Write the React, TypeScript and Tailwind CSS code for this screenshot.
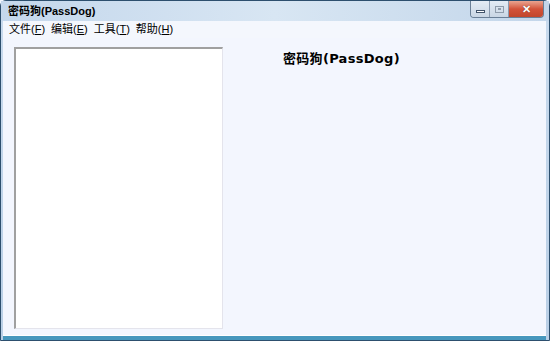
import React from 'react'

const font = { fontFamily: '"Liberation Sans", "Noto Sans CJK SC", sans-serif' }

const App = () => {
  return (
    <div className="w-[550px] h-[341px] bg-[#f3f6fe] overflow-hidden" style={font}>
      <div className="w-full h-full flex flex-col rounded-t-[6px] border border-[#2d4f6e] bg-gradient-to-b from-[#c9dbee] to-[#b9cfe6]">
        {/* title bar */}
        <div className="h-[20px] flex items-center justify-between pl-[7px] pr-[5px] bg-gradient-to-r from-[#c4d7ec] via-[#d8e6f3] to-[#c3d6ea]">
          <span className="text-[11px] font-bold text-black">密码狗(PassDog)</span>
          <div className="flex h-[17px] self-start rounded-b-[4px] overflow-hidden border border-t-0 border-[#6a7f96]">
            <div className="w-[19px] flex items-center justify-center bg-gradient-to-b from-[#e4ecf5] to-[#c9d6e4] border-r border-[#8a9bb0]">
              <div className="w-[9px] h-[3px] border border-[#41536a] bg-white mt-[4px]" />
            </div>
            <div className="w-[19px] flex items-center justify-center bg-gradient-to-b from-[#e4ecf5] to-[#c9d6e4] border-r border-[#8a9bb0]">
              <div className="w-[9px] h-[7px] border border-[#8f9cab] flex items-center justify-center">
                <div className="w-[3px] h-[2px] bg-[#8f9cab]" />
              </div>
            </div>
            <div className="w-[34px] flex items-center justify-center bg-gradient-to-b from-[#e9a490] via-[#d3533a] to-[#c1472c]">
              <span className="text-white font-bold text-[11px] leading-none" style={{ textShadow: '0 0 1px #5a1a0a' }}>✕</span>
            </div>
          </div>
        </div>
        {/* body */}
        <div className="flex-1 flex flex-col ml-[2px] mr-[3px] border-b-[4px] border-[#4797bd]">
          <div className="h-[17px] flex items-center gap-[6px] pl-[6px] bg-[#f4f7fd] text-[11px] text-black">
            <span>文件(<u>F</u>)</span>
            <span>编辑(<u>E</u>)</span>
            <span>工具(<u>T</u>)</span>
            <span>帮助(<u>H</u>)</span>
          </div>
          <div className="flex-1 flex bg-[#f3f6fe] pt-[9px] pl-[11px] pb-[6px] border-b border-white">
            <div className="w-[209px] h-full bg-white border-t-2 border-l-2 border-r border-b border-t-[#a0a0a0] border-l-[#a0a0a0] border-r-[#e4e4ec] border-b-[#e4e4ec]" />
            <div className="flex-1 flex pt-[2px] pl-[60px]">
              <span className="text-[13px] font-bold text-black tracking-[0.3px]" style={{ fontFamily: '"DejaVu Sans", "Noto Sans CJK SC", sans-serif' }}>密码狗(PassDog)</span>
            </div>
          </div>
        </div>
      </div>
    </div>
  )
}

export default App
